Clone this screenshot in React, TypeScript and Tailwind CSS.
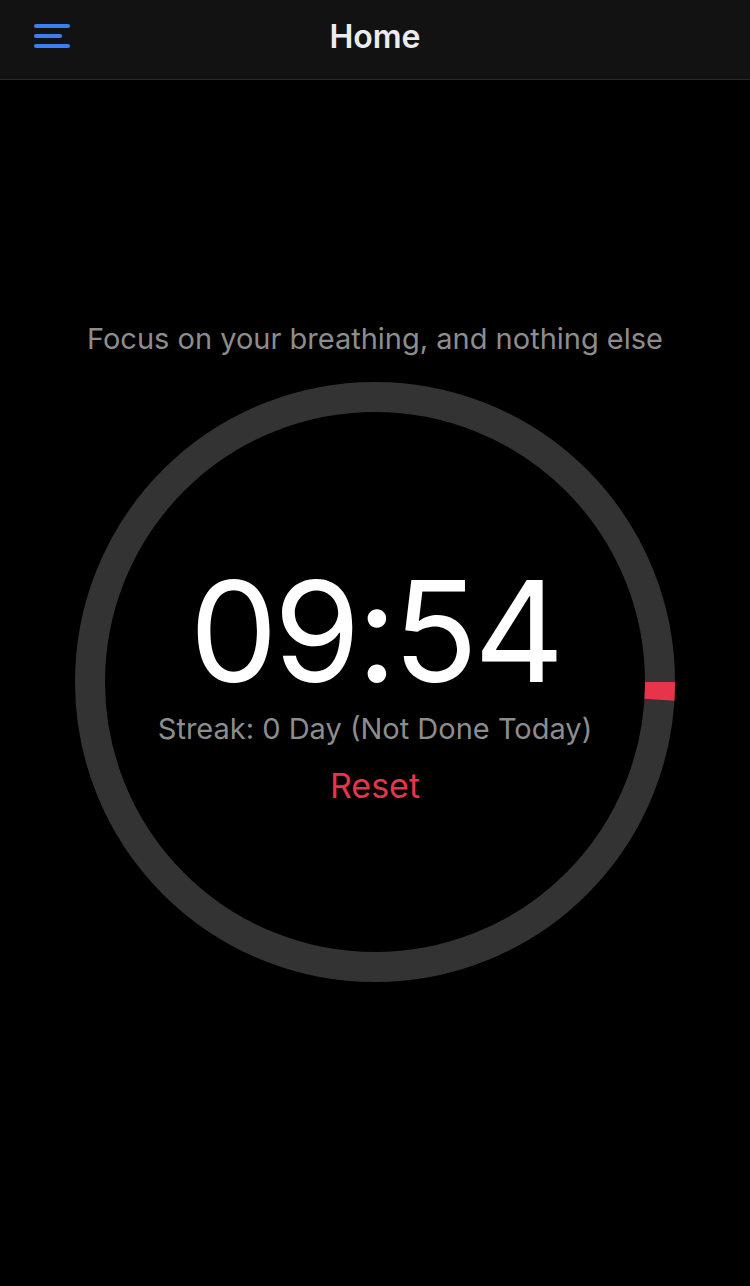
import { useState } from 'react';

const TOTAL = 600;

function ProgressRing({ elapsed }: { elapsed: number }) {
  const r = 285;
  const c = 2 * Math.PI * r;
  const done = (elapsed / TOTAL) * c;
  return (
    <svg className="absolute inset-0" width="600" height="600" viewBox="0 0 600 600">
      <circle cx="300" cy="300" r={r} fill="none" stroke="#333333" strokeWidth="30" />
      <circle
        cx="300"
        cy="300"
        r={r}
        fill="none"
        stroke="#e8344a"
        strokeWidth="30"
        strokeDasharray={`${done} ${c}`}
      />
    </svg>
  );
}

export default function App() {
  const [elapsed, setElapsed] = useState(6);
  const left = TOTAL - elapsed;
  const mm = String(Math.floor(left / 60)).padStart(2, '0');
  const ss = String(left % 60).padStart(2, '0');

  return (
    <div className="min-h-[1286px] bg-black font-['Inter','Liberation_Sans',sans-serif]">
      {/* Header */}
      <header className="relative flex h-20 items-center justify-center border-b border-[#2a2a2a] bg-[#121212] pb-[6px]">
        <button className="absolute left-[34px] top-[24px] flex w-9 flex-col gap-[6px]">
          <span className="h-[4px] w-9 rounded-full bg-[#3a7ff2]" />
          <span className="h-[4px] w-7 rounded-full bg-[#3a7ff2]" />
          <span className="h-[4px] w-9 rounded-full bg-[#3a7ff2]" />
        </button>
        <h1 className="text-[32px] font-semibold text-[#ececec]">Home</h1>
      </header>

      {/* Timer */}
      <main className="flex flex-col items-center pt-[239px]">
        <p className="text-[29px] leading-[40px] text-[#8d8d8d]">Focus on your breathing, and nothing else</p>
        <div className="relative mt-[23px] flex h-[600px] w-[600px] flex-col items-center justify-center">
          <ProgressRing elapsed={elapsed} />
          <div className="relative flex flex-col items-center pt-[2px]">
            <span className="text-[140px] leading-[140px] font-normal tracking-[-4px] text-white">
              {mm}:{ss}
            </span>
            <span className="mt-[8px] text-[29px] leading-[40px] text-[#8d8d8d]">
              Streak: 0 Day (Not Done Today)
            </span>
            <button
              onClick={() => setElapsed(0)}
              className="mt-[17px] text-[34px] leading-[40px] text-[#e8344a]"
            >
              Reset
            </button>
          </div>
        </div>
      </main>
    </div>
  );
}
